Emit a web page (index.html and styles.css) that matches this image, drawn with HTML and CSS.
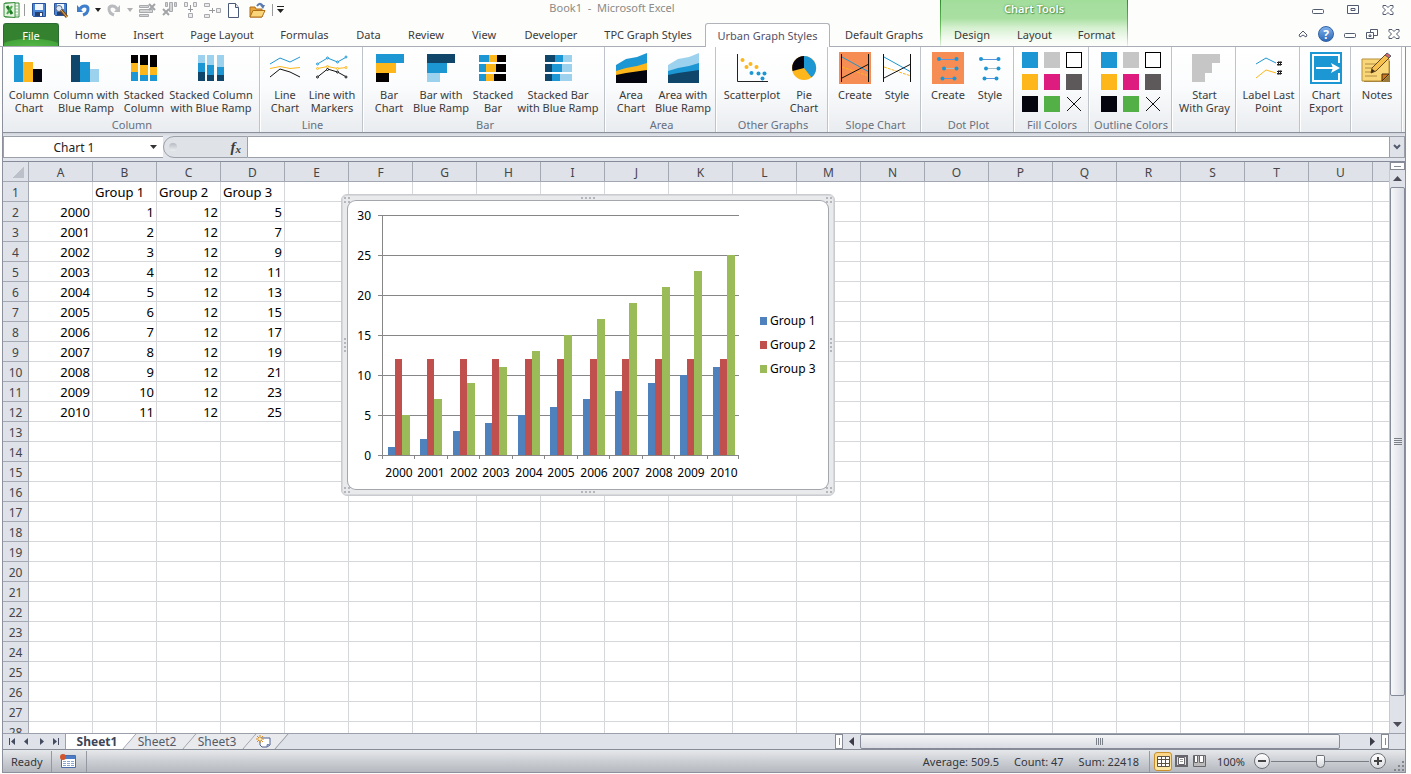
FILE: index.html
```html
<!DOCTYPE html>
<html lang="en">
<head>
    <meta charset="UTF-8">
    <meta name="viewport" content="width=device-width, initial-scale=1.0">
    <title>Book1 - Microsoft Excel</title>
    <link rel="stylesheet" href="styles.css">
</head>
<body>
    <div class="app">
        <header class="top">
            <div class="title-bar">
                <div class="quick-access">
                    <svg class="qa-logo" width="18" height="18" viewBox="0 0 18 18"><path d="M2 2h14v14H2z" fill="#fff" stroke="#2f8a35"/><path d="M11 5h4M11 8h4M11 11h4M11 14h4" stroke="#8cc48c"/><path d="M1 2.500l11-1v15l-11-1z" fill="#e3f3df" stroke="#3a8f3f"/><path d="M4 5l5 8" stroke="#1f7a26" stroke-width="3"/><path d="M9 5l-5 8" stroke="#4faa50" stroke-width="2"/></svg>
                    <span class="qa-line"></span>
                    <button aria-label="Save"><svg width="16" height="16" viewBox="0 0 16 16"><path d="M1.500 1.500h13v13h-12l-1-1z" fill="#4a86d8" stroke="#2a5298"/><path d="M4 2h8v6H4z" fill="#f0f6fd"/><path d="M4 10h8v4H4z" fill="#27406e"/><path d="M9 11h2v3H9z" fill="#fff"/></svg></button>
                    <button aria-label="Save as"><svg width="16" height="16" viewBox="0 0 16 16"><path d="M1.500 1.500h12v12h-11l-1-1z" fill="#4a86d8" stroke="#2a5298"/><path d="M4 2h7v5H4z" fill="#f0f6fd"/><path d="M4 10h6v3H4z" fill="#27406e"/><circle cx="6" cy="6.500" r="3" fill="#dbe9f8" stroke="#5d6c85"/><path d="M8 8l6 7" stroke="#7b4a1c" stroke-width="3"/><path d="M8 8l6 7" stroke="#f0b650"/></svg></button>
                    <button aria-label="Undo"><svg width="16" height="16" viewBox="0 0 16 16"><path d="M5 7c2-4 8-4 8 0 0 3-2 5-5 6" fill="none" stroke="#3f7ecb" stroke-width="3"/><path d="M2 3v7h6z" fill="#3f7ecb"/></svg></button>
                    <button class="qa-drop" aria-label="Undo list"><svg width="6" height="4" viewBox="0 0 6 4"><path d="M0 0h6L3 4z" fill="#222"/></svg></button>
                    <button aria-label="Redo"><svg width="16" height="16" viewBox="0 0 16 16"><path d="M10 7c-2-4-8-4-8 0 0 3 2 5 5 6" fill="none" stroke="#b9bbbf" stroke-width="3"/><path d="M13 3v7H7z" fill="#b9bbbf"/></svg></button>
                    <button class="qa-drop" aria-label="Redo list"><svg width="6" height="4" viewBox="0 0 6 4"><path d="M0 0h6L3 4z" fill="#b0b0b0"/></svg></button>
                    <button aria-label="Delete rows"><svg width="18" height="16" viewBox="0 0 18 16"><path d="M.5 3.500h9v2h-9zM.5 7.500h13v3H.5zM.5 12.500h9v2h-9z" fill="#d3d4d6" stroke="#a8aaae"/><path d="M10 2l6 6M16 2l-6 6" stroke="#a2a4a8" stroke-width="2"/></svg></button>
                    <button class="qa-wide" aria-label="Delete columns"><svg width="16" height="16" viewBox="0 0 16 16"><path d="M3.500.5h2v4h-2zM7.500.5h3v9h-3zM12.500.5h2v4h-2z" fill="#d3d4d6" stroke="#a8aaae"/><path d="M1 7l6 6M7 7l-6 6" stroke="#a2a4a8" stroke-width="2"/></svg></button>
                    <button class="qa-wide" aria-label="Insert column"><svg width="16" height="16" viewBox="0 0 16 16"><path d="M1.500.5h3v4h-3zM10.500.5h3v4h-3zM5.500 11.500h4v4h-4z" fill="#ececee" stroke="#a8aaae"/><path d="M7.500 3v7M5 7.500h5" stroke="#96989c"/></svg></button>
                    <button class="qa-wide" aria-label="Insert row"><svg width="18" height="16" viewBox="0 0 18 16"><path d="M.5 1.500h5v3h-5zM.5 12.500h5v3h-5zM12.500 6.500h4v4h-4z" fill="#ececee" stroke="#a8aaae"/><path d="M5 8.500h6M8.500 6v5" stroke="#96989c"/></svg></button>
                    <button aria-label="New"><svg width="12" height="16" viewBox="0 0 12 16"><path d="M.5 1.500h7l3 4v10H.5z" fill="#fff" stroke="#4c5878"/><path d="M7.500 1.500v4h3" fill="#dce4f2" stroke="#4c5878"/></svg></button>
                    <button class="qa-open" aria-label="Open"><svg width="17" height="16" viewBox="0 0 17 16"><path d="M1 5h5l1 2h6v8H1z" fill="#e9a53a" stroke="#b06f1a"/><path d="M4 8.500h12l-3 6.500H1z" fill="#fbd57a" stroke="#b06f1a"/><path d="M8 4c2-3 4-3 6 0" fill="none" stroke="#5a7ab0" stroke-width="2"/><path d="M11 3h5l-2 4z" fill="#5a7ab0"/></svg></button>
                    <span class="qa-line"></span>
                    <button class="qa-drop" aria-label="Customize toolbar"><svg width="7" height="8" viewBox="0 0 7 8"><path d="M0 0h7v1H0zM0 3h7L3.500 7z" fill="#222"/></svg></button>
                </div>
                <div class="doc-title">Book1&nbsp; -&nbsp; Microsoft Excel</div>
                <div class="window-buttons">
                    <button aria-label="Minimize"><svg width="12" height="12"><use href="#i-min"/></svg></button>
                    <button aria-label="Maximize"><svg width="12" height="12" viewBox="0 0 12 12"><path d="M.5 1.500h11v8H.5zM4 4.500h4v2H4z" fill="#fff" stroke="#525a70"/></svg></button>
                    <button aria-label="Close"><svg width="12" height="12"><use href="#i-close"/></svg></button>
                </div>
            </div>

            <nav class="tabs">
                <a class="tab file" href="#">File</a>
                <a class="tab" href="#">Home</a>
                <a class="tab" href="#">Insert</a>
                <a class="tab" href="#">Page Layout</a>
                <a class="tab" href="#">Formulas</a>
                <a class="tab" href="#">Data</a>
                <a class="tab" href="#">Review</a>
                <a class="tab" href="#">View</a>
                <a class="tab" href="#">Developer</a>
                <a class="tab" href="#">TPC Graph Styles</a>
                <a class="tab active" href="#">Urban Graph Styles</a>
                <a class="tab" href="#">Default Graphs</a>
                <div class="chart-tools">
                    <span class="chart-tools-title">Chart Tools</span>
                    <a class="tab" href="#">Design</a>
                    <a class="tab" href="#">Layout</a>
                    <a class="tab" href="#">Format</a>
                </div>
                <div class="tab-buttons">
                    <button aria-label="Collapse ribbon"><svg width="10" height="8" viewBox="0 0 10 8"><path d="M1 5l4-4 4 4-1 2-3-2-3 2z" fill="#fff" stroke="#525a70"/></svg></button>
                    <button class="help" aria-label="Help">?</button>
                    <button aria-label="Minimize workbook"><svg width="12" height="12"><use href="#i-min"/></svg></button>
                    <button aria-label="Restore workbook"><svg width="12" height="12" viewBox="0 0 12 12"><path d="M4.500 1.500h7v6h-7z" fill="#fff" stroke="#525a70"/><path d="M.5 4.500h7v6h-7zM3 7h2v1.500H3z" fill="#fff" stroke="#525a70"/></svg></button>
                    <button aria-label="Close workbook"><svg width="12" height="12"><use href="#i-close"/></svg></button>
                </div>
            </nav>
        </header>

        <main class="window">
            <div class="ribbon">
                <section class="group g-column">
                    <div class="tools">
                        <button class="tool"><svg width="32" height="32" viewBox="0 0 32 32"><path d="M1 3h9v27H1z" fill="#1d97d4"/><path d="M10 10h10v20H10z" fill="#fdb71a"/><path d="M20 17h9v13h-9z" fill="#050510"/></svg>Column<br>Chart</button>
                        <button class="tool"><svg width="32" height="32" viewBox="0 0 32 32"><path d="M1 3h9v27H1z" fill="#10466a"/><path d="M10 10h10v20H10z" fill="#1d97d4"/><path d="M20 17h9v13h-9z" fill="#9dd2ef"/></svg>Column with<br>Blue Ramp</button>
                        <button class="tool"><svg width="32" height="32" viewBox="0 0 32 32"><path d="M3 3h7v8H3zM12 3h8v10h-8zM22 3h7v12h-7z" fill="#050000"/><path d="M3 11h7v9H3zM12 13h8v10h-8zM22 15h7v8h-7z" fill="#fdb71a"/><path d="M3 20h7v9H3zM12 23h8v6h-8zM22 23h7v6h-7z" fill="#1d97d4"/></svg>Stacked<br>Column</button>
                        <button class="tool"><svg width="32" height="32" viewBox="0 0 32 32"><path d="M3 3h7v8H3zM12 3h7v10h-7zM22 3h7v12h-7z" fill="#9dd2ef"/><path d="M3 11h7v9H3zM12 13h7v10h-7zM22 15h7v8h-7z" fill="#1d97d4"/><path d="M3 20h7v9H3zM12 23h7v6h-7zM22 23h7v6h-7z" fill="#10466a"/></svg>Stacked Column<br>with Blue Ramp</button>
                    </div>
                    <h2>Column</h2>
                </section>
                <section class="group g-line">
                    <div class="tools">
                        <button class="tool"><svg width="32" height="32" viewBox="0 0 32 32" fill="none"><path d="M1 12l10-6 10 4 10-5" stroke="#1d97d4"/><path d="M1 16.500l10-2 10 2 10-1" stroke="#fdb71a"/><path d="M1 25l10-8 10 3 10 5" stroke="#111"/></svg>Line<br>Chart</button>
                        <button class="tool"><svg width="32" height="32" viewBox="0 0 32 32" fill="#fff"><path d="M1.500 12l10-6 10 4 9-5" fill="none" stroke="#1d97d4"/><path d="M1.500 16.500l10-2 10 2 9-1" fill="none" stroke="#fdb71a"/><path d="M1.500 25l10-8 10 3 9 5" fill="none" stroke="#111"/><g stroke="#1d97d4"><circle cx="1.500" cy="12" r="1"/><circle cx="11.500" cy="6" r="1"/><circle cx="21.500" cy="10" r="1"/><circle cx="30" cy="5" r="1"/></g><g stroke="#fdb71a"><circle cx="1.500" cy="16.500" r="1"/><circle cx="11.500" cy="14.500" r="1"/><circle cx="21.500" cy="16.500" r="1"/><circle cx="30" cy="15.500" r="1"/></g><g stroke="#111"><circle cx="1.500" cy="25" r="1"/><circle cx="11.500" cy="17.500" r="1"/><circle cx="21.500" cy="20" r="1"/><circle cx="30" cy="25" r="1"/></g></svg>Line with<br>Markers</button>
                    </div>
                    <h2>Line</h2>
                </section>
                <section class="group g-bar">
                    <div class="tools">
                        <button class="tool"><svg width="32" height="32" viewBox="0 0 32 32"><path d="M3 2h28v9H3z" fill="#1d97d4"/><path d="M3 11h20v10H3z" fill="#fdb71a"/><path d="M3 21h13v9H3z" fill="#050000"/></svg>Bar<br>Chart</button>
                        <button class="tool"><svg width="32" height="32" viewBox="0 0 32 32"><path d="M2 2h28v9H2z" fill="#10466a"/><path d="M2 11h20v10H2z" fill="#1d97d4"/><path d="M2 21h13v9H2z" fill="#9dd2ef"/></svg>Bar with<br>Blue Ramp</button>
                        <button class="tool"><svg width="32" height="32" viewBox="0 0 32 32"><path d="M2 3h10v7H2zM2 12h7v8H2zM2 22h7v7H2z" fill="#1d97d4"/><path d="M12 3h8v7h-8zM9 12h10v8H9zM9 22h8v7H9z" fill="#fdb71a"/><path d="M20 3h9v7h-9zM19 12h10v8H19zM17 22h12v7H17z" fill="#050000"/></svg>Stacked<br>Bar</button>
                        <button class="tool"><svg width="32" height="32" viewBox="0 0 32 32"><path d="M3 3h10v7H3zM3 12h7v8H3zM3 22h7v7H3z" fill="#10466a"/><path d="M13 3h8v7h-8zM10 12h10v8H10zM10 22h8v7h-8z" fill="#1d97d4"/><path d="M21 3h9v7h-9zM20 12h10v8H20zM18 22h12v7H18z" fill="#9dd2ef"/></svg>Stacked Bar<br>with Blue Ramp</button>
                    </div>
                    <h2>Bar</h2>
                </section>
                <section class="group g-area">
                    <div class="tools">
                        <button class="tool"><svg width="32" height="32" viewBox="0 0 32 32"><path d="M1 13l10-6 11-2 10-4v30H1z" fill="#1d97d4"/><path d="M1 19l10-3 11-2 10-3v20H1z" fill="#fdb71a"/><path d="M1 23l10-2 21-3v13H1z" fill="#050510"/></svg>Area<br>Chart</button>
                        <button class="tool"><svg width="32" height="32" viewBox="0 0 32 32"><path d="M1 13l10-6 11-2 10-4v30H1z" fill="#9dd2ef"/><path d="M1 19l10-3 11-2 10-3v20H1z" fill="#1d97d4"/><path d="M1 23l10-2 21-3v13H1z" fill="#10466a"/></svg>Area with<br>Blue Ramp</button>
                    </div>
                    <h2>Area</h2>
                </section>
                <section class="group g-other">
                    <div class="tools">
                        <button class="tool"><svg width="32" height="32" viewBox="0 0 32 32"><path d="M1.500 2v27.500H32" fill="none" stroke="#222"/><g fill="#fdb71a"><circle cx="6.500" cy="8" r="2"/><circle cx="10.500" cy="15" r="2"/><circle cx="14.500" cy="12" r="2"/><circle cx="20.500" cy="15" r="2"/></g><g fill="#1d97d4"><circle cx="15.500" cy="21" r="2"/><circle cx="22.500" cy="21.500" r="2"/><circle cx="28.500" cy="21.500" r="2"/><circle cx="26.500" cy="26.500" r="2"/></g></svg>Scatterplot</button>
                        <button class="tool"><svg width="32" height="32" viewBox="0 0 32 32"><circle cx="16" cy="16" r="12" fill="#fdb71a"/><path d="M16 16V4a12 12 0 0 1 7.500 21.500z" fill="#1d97d4"/><path d="M16 16L4.500 19A12 12 0 0 1 16 4z" fill="#050510"/></svg>Pie<br>Chart</button>
                    </div>
                    <h2>Other Graphs</h2>
                </section>
                <section class="group g-slope">
                    <div class="tools">
                        <button class="tool"><svg width="32" height="32" viewBox="0 0 32 32"><path d="M0 0h32v32H0z" fill="#f58d54"/><use href="#i-slope"/></svg>Create</button>
                        <button class="tool"><svg width="32" height="32" viewBox="0 0 32 32"><use href="#i-slope"/></svg>Style</button>
                    </div>
                    <h2>Slope Chart</h2>
                </section>
                <section class="group g-dot">
                    <div class="tools">
                        <button class="tool"><svg width="32" height="32" viewBox="0 0 32 32"><path d="M0 0h32v32H0z" fill="#f58d54"/><use href="#i-dots"/></svg>Create</button>
                        <button class="tool"><svg width="32" height="32" viewBox="0 0 32 32"><use href="#i-dots"/></svg>Style</button>
                    </div>
                    <h2>Dot Plot</h2>
                </section>
                <section class="group g-fill">
                    <div class="swatches">
                        <button class="blue" aria-label="Blue"></button><button class="gray" aria-label="Gray"></button><button class="white" aria-label="White"></button>
                        <button class="yellow" aria-label="Yellow"></button><button class="pink" aria-label="Pink"></button><button class="dark" aria-label="Dark gray"></button>
                        <button class="black" aria-label="Black"></button><button class="green" aria-label="Green"></button><button aria-label="None"><svg width="16" height="16"><use href="#i-none"/></svg></button>
                    </div>
                    <h2>Fill Colors</h2>
                </section>
                <section class="group g-outline">
                    <div class="swatches">
                        <button class="blue" aria-label="Blue"></button><button class="gray" aria-label="Gray"></button><button class="white" aria-label="White"></button>
                        <button class="yellow" aria-label="Yellow"></button><button class="pink" aria-label="Pink"></button><button class="dark" aria-label="Dark gray"></button>
                        <button class="black" aria-label="Black"></button><button class="green" aria-label="Green"></button><button aria-label="None"><svg width="16" height="16"><use href="#i-none"/></svg></button>
                    </div>
                    <h2>Outline Colors</h2>
                </section>
                <section class="group g-single">
                    <div class="tools">
                        <button class="tool"><svg width="32" height="32" viewBox="0 0 32 32"><path d="M3 2h28v9h-8v10h-7v9H3z" fill="#c6c6c6"/></svg>Start<br>With Gray</button>
                    </div>
                </section>
                <section class="group g-single">
                    <div class="tools">
                        <button class="tool"><svg width="32" height="32" viewBox="0 0 32 32" fill="none"><path d="M3 12l10-6 10 5" stroke="#1d97d4"/><path d="M3 26l10-8 10 3" stroke="#fdb71a"/><path d="M24 10.500h5M24 12.500h5M26 9l-1 5M28 9l-1 5M24 19.500h5M24 21.500h5M26 18l-1 5M28 18l-1 5" stroke="#222"/></svg>Label Last<br>Point</button>
                    </div>
                </section>
                <section class="group g-small">
                    <div class="tools">
                        <button class="tool"><svg width="32" height="32" viewBox="0 0 32 32"><path d="M0 0h32v32H0z" fill="#1d97d4"/><path d="M29 11V3H3v26h26v-8" fill="none" stroke="#fff" stroke-width="2"/><path d="M6 16h18" stroke="#fff" stroke-width="2"/><path d="M21 11l9 5-9 5 2-5z" fill="#fff"/></svg>Chart<br>Export</button>
                    </div>
                </section>
                <section class="group g-small">
                    <div class="tools">
                        <button class="tool"><svg width="32" height="32" viewBox="0 0 32 32"><path d="M3 9h26v21H3z" fill="#9a7a3a"/><path d="M1 7h27v16l-6 6H1z" fill="#f9d677" stroke="#b58f3c"/><path d="M28 22l-7 7v-7z" fill="#c9781f" stroke="#4a2d10"/><path d="M4 12h15M4 16h13M4 20h8M4 24h12" stroke="#b08d45"/><path d="M10 21l1-5L25 2l4 3-14 14z" fill="#f6c04e" stroke="#6a4a1c"/><path d="M24 3l2-2 4 3-2 2z" fill="#d9636b" stroke="#54606c"/><path d="M10 21l1-4 3 2z" fill="#3c2c1c"/></svg>Notes</button>
                    </div>
                </section>
            </div>

            <div class="formula-bar">
                <div class="name-box">
                    <input type="text" value="Chart 1" aria-label="Name box">
                    <button aria-label="Name list"><svg width="7" height="4" viewBox="0 0 7 4"><path d="M0 0h7L3.500 4z" fill="#333"/></svg></button>
                </div>
                <div class="fx">
                    <span class="knob"></span>
                    <button aria-label="Insert function"><i>f</i><i class="sub">x</i></button>
                </div>
                <input class="formula" type="text" aria-label="Formula">
                <button class="expand" aria-label="Expand formula bar"><svg width="8" height="6" viewBox="0 0 8 6"><path d="M1 1l3 3 3-3" fill="none" stroke="#525a70" stroke-width="2"/></svg></button>
            </div>

            <div class="workbook">
                <div class="sheet" id="sheet">
                    <table class="grid" id="grid"></table>
                    <div class="chart-frame">
                        <svg id="chart" width="480" height="288" viewBox="348 201 480 288" role="img" aria-label="Column chart of the three groups, 2000 to 2010"></svg>
                        <i class="grip top"></i><i class="grip bottom"></i><i class="grip left"></i><i class="grip right"></i>
                        <i class="corner nw"></i><i class="corner ne"></i><i class="corner sw"></i><i class="corner se"></i>
                    </div>
                </div>
                <div class="v-scroll">
                    <span class="v-split"></span>
                    <button aria-label="Scroll up"><svg width="9" height="5" viewBox="0 0 9 5"><path d="M0 5h9L4.500 0z" fill="#4c4c58"/></svg></button>
                    <div class="v-thumb"><span></span></div>
                    <button class="v-down" aria-label="Scroll down"><svg width="9" height="5" viewBox="0 0 9 5"><path d="M0 0h9L4.500 5z" fill="#4c4c58"/></svg></button>
                </div>
            </div>

            <div class="sheet-bar">
                <div class="sheet-nav">
                    <button aria-label="First sheet"><svg width="7" height="7" viewBox="0 0 7 7"><path d="M0 0h1v7H0zM6 0v7L2 3.500z"/></svg></button>
                    <button aria-label="Previous sheet"><svg width="7" height="7" viewBox="0 0 7 7"><path d="M5 0v7L1 3.500z"/></svg></button>
                    <button aria-label="Next sheet"><svg width="7" height="7" viewBox="0 0 7 7"><path d="M2 0v7l4-3.500z"/></svg></button>
                    <button aria-label="Last sheet"><svg width="7" height="7" viewBox="0 0 7 7"><path d="M6 0h1v7H6zM1 0v7l4-3.500z"/></svg></button>
                </div>
                <div class="sheet-tabs">
                    <a class="current" href="#">Sheet1</a>
                    <a href="#">Sheet2</a>
                    <a href="#">Sheet3</a>
                    <button aria-label="New sheet"><svg width="16" height="14" viewBox="0 0 16 14"><path d="M4 3h10v7l-3 2H6l-2-2z" fill="#fff" stroke="#4d5f8e"/><path d="M14 9l-4 3 1-3z" fill="#6e82b4"/><path d="M4 0v8M0 4h8M1 1l6 6M7 1L1 7" stroke="#d98a1e"/><circle cx="4" cy="4" r="1.500" fill="#ffe9a8"/></svg></button>
                </div>
                <div class="h-scroll">
                    <span class="h-split"></span>
                    <button aria-label="Scroll left"><svg width="5" height="9" viewBox="0 0 5 9"><path d="M5 0v9L0 4.500z" fill="#3c3c48"/></svg></button>
                    <div class="h-thumb"><span></span></div>
                    <button class="h-right" aria-label="Scroll right"><svg width="5" height="9" viewBox="0 0 5 9"><path d="M0 0v9l5-4.500z" fill="#3c3c48"/></svg></button>
                    <span class="h-split"></span>
                </div>
            </div>

            <footer class="status">
                <span class="ready">Ready</span>
                <button class="macro" aria-label="Record macro"><svg width="16" height="14" viewBox="0 0 16 14"><path d="M1.500 1.500h14v12h-14z" fill="#fff" stroke="#4a6ca8"/><path d="M2 2h13v3H2z" fill="#4a7cc8"/><path d="M3 7.500h3M7 7.500h3M11 7.500h3M3 9.500h3M7 9.500h3M11 9.500h3M3 11.500h3M7 11.500h3M11 11.500h3" stroke="#8ba6d0"/><circle cx="3" cy="3" r="3" fill="#d3552c"/></svg></button>
                <div class="figures">
                    <span>Average: 509.5</span>
                    <span>Count: 47</span>
                    <span>Sum: 22418</span>
                </div>
                <div class="views">
                    <button class="on" aria-label="Normal view"><svg width="13" height="11" viewBox="0 0 13 11"><path d="M.5.5h12v10H.5zM.5 3.500h12M.5 7.500h12M4.500.5v10M8.500.5v10" fill="#fff" stroke="#5c5340"/></svg></button>
                    <button aria-label="Page layout view"><svg width="13" height="12" viewBox="0 0 13 12"><path d="M1 1h11v10H1z" fill="#ddd" stroke="#66666c" stroke-width="2"/><path d="M3.500 2.500h6v7h-6z" fill="#fff" stroke="#66666c"/><path d="M5 4.500h3M5 6.500h3" stroke="#999"/></svg></button>
                    <button aria-label="Page break preview"><svg width="13" height="12" viewBox="0 0 13 12"><path d="M.5.5h12v11H.5z" fill="#bbb" stroke="#66666c"/><path d="M1.500.5h3v7h-3zM6.500.5h4v7h-4z" fill="#fff" stroke="#66666c"/></svg></button>
                </div>
                <span class="zoom-level">100%</span>
                <button class="round" aria-label="Zoom out"><svg width="8" height="8" viewBox="0 0 8 8"><path d="M0 3h8v2H0z" fill="#444"/></svg></button>
                <input class="zoom" type="range" min="0" max="100" value="50" aria-label="Zoom">
                <button class="round" aria-label="Zoom in"><svg width="8" height="8" viewBox="0 0 8 8"><path d="M0 3h8v2H0zM3 0h2v8H3z" fill="#444"/></svg></button>
                <svg class="resize" width="12" height="12" viewBox="0 0 12 12"><path d="M9 1h2v2H9zM9 5h2v2H9zM5 5h2v2H5zM9 9h2v2H9zM5 9h2v2H5zM1 9h2v2H1z" fill="#83868c"/></svg>
            </footer>
        </main>
    </div>

    <svg width="0" height="0" class="defs">
        <symbol id="i-min" viewBox="0 0 12 12"><rect x=".5" y="5.500" width="11" height="4" rx="1" fill="#fff" stroke="#525a70"/></symbol>
        <symbol id="i-close" viewBox="0 0 12 12"><path d="M1 1.500h3l2 2 2-2h3v2L8.500 6 11 8.500v2H8l-2-2-2 2H1v-2L3.500 6 1 3.500z" fill="#fff" stroke="#525a70"/></symbol>
        <symbol id="i-none" viewBox="0 0 16 16"><path d="M1 1l14 14M15 1L1 15" stroke="#111"/></symbol>
        <symbol id="i-slope" viewBox="0 0 32 32"><path d="M3 5l27 15" stroke="#1d97d4" fill="none"/><path d="M3 15l27 9" stroke="#fdb71a" stroke-dasharray="3 1"/><path d="M3 26l27-14" stroke="#111"/><path d="M2.500 2v28M29.500 2v28" stroke="#111"/></symbol>
        <symbol id="i-dots" viewBox="0 0 32 32"><path d="M7 7.500h17M10 26.500h12" stroke="#5b95e0"/><path d="M12 16.500h13" stroke="#a9bfc8"/><g fill="#1d97d4"><circle cx="7" cy="7" r="2"/><circle cx="24.500" cy="7" r="2"/><circle cx="12" cy="16.500" r="2"/><circle cx="24.500" cy="16.500" r="2"/><circle cx="10.500" cy="26.500" r="2"/><circle cx="22.500" cy="26.500" r="2"/></g></symbol>
    </svg>

    <script>
        const series = [
            { name: 'Group 1', color: '#4f81bd', values: [1, 2, 3, 4, 5, 6, 7, 8, 9, 10, 11] },
            { name: 'Group 2', color: '#c0504d', values: [12, 12, 12, 12, 12, 12, 12, 12, 12, 12, 12] },
            { name: 'Group 3', color: '#9bbb59', values: [5, 7, 9, 11, 13, 15, 17, 19, 21, 23, 25] }
        ];
        const years = series[0].values.map((v, i) => 2000 + i);

        // Worksheet
        const sheet = document.getElementById('sheet');
        const grid = document.getElementById('grid');

        function colName(i) {
            return (i > 25 ? colName(Math.floor(i / 26) - 1) : '') + String.fromCharCode(65 + i % 26);
        }

        function cell(row, col) {
            if (col > 3) return '<td></td>';
            if (row === 1) return '<td>' + (col ? series[col - 1].name : '') + '</td>';
            if (row > 12) return '<td></td>';
            return '<td class="num">' + (col ? series[col - 1].values[row - 2] : years[row - 2]) + '</td>';
        }

        // Fill the visible area; the last column is only partly in view and has no letter
        function drawGrid() {
            const count = Math.max(4, Math.ceil((sheet.clientWidth - 26) / 64));
            const rows = Math.ceil((sheet.clientHeight - 20) / 20);
            const cols = Array.from({ length: count }, (_, i) => i < count - 1 ? colName(i) : '');

            let html = '<thead><tr><th class="row-head select-all"></th>' + cols.map(c => '<th>' + c + '</th>').join('') + '</tr></thead><tbody>';
            for (let r = 1; r <= rows; r++) {
                html += '<tr><th class="row-head">' + r + '</th>' + cols.map((c, i) => cell(r, i)).join('') + '</tr>';
            }
            grid.style.width = 26 + count * 64 + 'px';
            grid.innerHTML = html + '</tbody>';
        }

        drawGrid();
        window.addEventListener('resize', drawGrid);

        // Chart
        const left = 382, right = 739, base = 455, unit = 8;
        const step = (right - left) / years.length;
        let svg = '';

        for (let v = 0; v <= 30; v += 5) {
            const y = base - v * unit;
            svg += `<path class="axis" d="M${left - 4} ${y + 0.5}H${right}"/>`;
            svg += `<text x="371" y="${y + 5}" text-anchor="end">${v}</text>`;
        }
        years.forEach((year, i) => {
            const x = Math.round(left + i * step);
            series.forEach((s, n) => {
                const h = s.values[i] * unit;
                svg += `<rect x="${x + 6 + n * 7}" y="${base - h}" width="${n === 2 ? 8 : 7}" height="${h}" fill="${s.color}"/>`;
            });
            svg += `<path class="axis" d="M${x + 0.5} ${base}v4"/>`;
            svg += `<text x="${x + 17}" y="477" text-anchor="middle">${year}</text>`;
        });
        svg += `<path class="axis" d="M${left + 0.5} 215V${base}M${right - 0.5} ${base}v4M${left} ${base + 0.5}H${right}"/>`;
        series.forEach((s, i) => {
            svg += `<rect x="760" y="${317 + i * 24}" width="7" height="8" fill="${s.color}"/>`;
            svg += `<text x="770" y="${325 + i * 24}">${s.name}</text>`;
        });
        document.getElementById('chart').innerHTML = svg;
    </script>
</body>
</html>
```
FILE: styles.css
```css
* {
    box-sizing: border-box;
}

body {
    margin: 0;
    font-family: "Noto Sans", "Open Sans", sans-serif;
    font-size: 11px;
    color: #3b3b3b;
    background: #fdfdfb;
}

button {
    display: flex;
    align-items: center;
    justify-content: center;
    padding: 0;
    border: 0;
    background: none;
    font: inherit;
    color: inherit;
}

input {
    border: 0;
    padding: 0;
    font: inherit;
    outline: none;
}

a {
    color: inherit;
    text-decoration: none;
}

svg {
    display: block;
    flex: none;
}

.defs {
    position: absolute;
}

.app {
    height: 100vh;
    display: flex;
    flex-direction: column;
    overflow: hidden;
}

/* Title bar and tabs */
.title-bar {
    display: grid;
    grid-template-columns: 281px 656px 1fr;
    height: 23px;
    padding: 0 10px 0 3px;
}

.quick-access {
    display: flex;
    align-items: center;
    gap: 6px;
    height: 20px;
}

.qa-logo {
    margin-right: -3px;
}

.qa-line {
    width: 1px;
    height: 12px;
    background: #9a9a9a;
}

.qa-drop {
    margin-left: -2px;
}

.qa-wide {
    margin-left: -1px;
}

.qa-open {
    margin-left: 3px;
}

.doc-title {
    color: #8b8b87;
    line-height: 15px;
    text-align: center;
}

.window-buttons {
    display: flex;
    justify-content: flex-end;
    gap: 23px;
    height: 20px;
    padding-right: 7px;
}

.tabs {
    display: flex;
    height: 24px;
    padding: 0 11px 0 3px;
    border-bottom: 1px solid #a9adb5;
}

.tab {
    flex: none;
    text-align: center;
    line-height: 24px;
    height: 23px;
    white-space: nowrap;
}

.tab:nth-child(2) { width: 61px; padding-left: 2px; }
.tab:nth-child(3) { width: 57px; }
.tab:nth-child(4) { width: 90px; }
.tab:nth-child(5) { width: 75px; }
.tab:nth-child(6) { width: 53px; }
.tab:nth-child(7) { width: 62px; }
.tab:nth-child(8) { width: 54px; }
.tab:nth-child(9) { width: 80px; }
.tab:nth-child(10) { width: 114px; }
.tab:nth-child(12) { width: 108px; }

.tab.file {
    width: 56px;
    color: #fff;
    border: 1px solid #2c6b35;
    border-bottom: 0;
    border-radius: 3px 3px 0 0;
    background: radial-gradient(ellipse 60% 40% at 50% 105%, #57b947 0, #45a63c 90%, #34812f 100%);
}

.tab.active {
    width: 125px;
    height: 24px;
    color: #565068;
    background: #fff;
    border: 1px solid #b0b3ba;
    border-bottom: 0;
    border-radius: 3px 3px 0 0;
}

.chart-tools {
    display: grid;
    grid-template-columns: 62px 63px 61px;
    align-content: end;
    width: 188px;
    height: 46px;
    margin: -23px 0 0 2px;
    border-left: 1px solid #4da345;
    border-right: 1px solid #4da345;
    border-image: linear-gradient(#2e8b2e, #6cbf5c 60%, #eaf6e6) 1;
    background: linear-gradient(#a3dd9c, #a9e0a2 40%, #d5f0d0 60%, #f4fbf2 85%, #fdfdfb);
}

.chart-tools .tab {
    width: auto;
    padding: 0;
}

.chart-tools-title {
    grid-column: 1 / -1;
    height: 23px;
    line-height: 17px;
    text-align: center;
    color: #fff;
    font-weight: 600;
    text-shadow: 0 0 2px #3f8a3a, 1px 1px 1px #5f9d58;
}

.tab-buttons {
    display: flex;
    align-items: center;
    gap: 10px;
    margin-left: auto;
    height: 22px;
}

.help {
    width: 16px;
    height: 16px;
    border: 1px solid #2f62a4;
    border-radius: 50%;
    background: linear-gradient(#7eb0ea, #2d68b8);
    color: #fff;
    font-weight: 700;
    font-size: 12px;
}

/* Window body */
.window {
    flex: 1;
    min-height: 0;
    display: flex;
    flex-direction: column;
    margin: 0 5px 1px 2px;
    border: 1px solid #8b909c;
    border-top: 0;
    background: #dfe2e8;
}

.ribbon {
    display: flex;
    height: 86px;
    background: linear-gradient(#fff, #fbfcfd 45%, #e9ecf0);
    border-bottom: 1px solid #8b909a;
}

.group {
    flex: none;
    display: flex;
    flex-direction: column;
    justify-content: space-between;
    padding: 5px 3px 0 4px;
    border-right: 1px solid #fff;
    box-shadow: inset -1px 0 #bfc3ca;
}

.group h2 {
    margin: 0;
    font-size: 11px;
    font-weight: 400;
    line-height: 15px;
    text-align: center;
    color: #66707f;
    white-space: nowrap;
}

.tools {
    display: grid;
}

.tool {
    flex-direction: column;
    justify-content: flex-start;
    line-height: 13px;
    white-space: nowrap;
}

.tool svg {
    margin-bottom: 4px;
}

.g-column { width: 258px; }
.g-column .tools { grid-template-columns: 44px 70px 46px 88px; }
.g-line { width: 103px; }
.g-line .tools { grid-template-columns: 40px 54px; }
.g-bar { width: 242px; }
.g-bar .tools { grid-template-columns: 42px 62px 42px 88px; }
.g-area { width: 111px; }
.g-area .tools { grid-template-columns: 42px 62px; }
.g-other { width: 112px; }
.g-other .tools { grid-template-columns: 62px 42px; }
.g-slope, .g-dot { width: 93px; }
.g-slope .tools, .g-dot .tools { grid-template-columns: 44px 40px; }
.g-fill { width: 75px; }
.g-outline { width: 83px; }
.g-single { width: 64px; }
.g-small { width: 51px; }

.group.g-fill, .group.g-outline, .group.g-single, .group.g-small {
    padding-left: 0;
    padding-right: 0;
}

.swatches {
    display: grid;
    grid-template-columns: repeat(3, 16px);
    gap: 6px;
    justify-content: center;
}

.swatches button {
    height: 16px;
}

.blue { background: #1d97d4; }
.gray { background: #c6c6c6; }
.swatches .white { background: #fff; border: 1px solid #000; }
.yellow { background: #fdb71a; }
.pink { background: #de1c7f; }
.dark { background: #5d585a; }
.black { background: #050510; }
.green { background: #53b046; }

/* Formula bar */
.formula-bar {
    display: flex;
    height: 29px;
    padding: 3px 0;
    background: linear-gradient(#cdd1d8, #e2e5ec 3px, #e2e5ec);
    border-bottom: 1px solid #868b9a;
}

.name-box {
    display: flex;
    width: 160px;
    background: #fff;
    border: 1px solid #9ba0a9;
    border-right: 0;
}

.name-box input {
    width: 140px;
    font-size: 12px;
    text-align: center;
    color: #222;
}

.name-box button {
    width: 19px;
}

.fx {
    display: flex;
    justify-content: space-between;
    align-items: center;
    width: 85px;
    padding: 0 6px 0 5px;
    border: 1px solid #9ba0a9;
    border-radius: 11px 0 0 11px;
    background: #dfe2e7;
}

.knob {
    width: 8px;
    height: 8px;
    border-radius: 50%;
    background: linear-gradient(#b7bbc2, #eceef1);
}

.fx button {
    font: bold 15px "Liberation Serif", serif;
}

.fx .sub {
    font-size: 11px;
    padding-top: 3px;
}

.formula {
    flex: 1;
    min-width: 0;
    background: #fff;
    border: 1px solid #9ba0a9;
    border-width: 1px 0;
}

.expand {
    width: 16px;
    border: 1px solid #9ba0a9;
    background: #dfe2e8;
}

/* Sheet */
.workbook {
    flex: 1;
    min-height: 0;
    display: flex;
}

.sheet {
    flex: 1;
    min-width: 0;
    position: relative;
    overflow: hidden;
    background: #fff;
}

.grid {
    table-layout: fixed;
    border-collapse: separate;
    border-spacing: 0;
    font-size: 13px;
    color: #000;
}

.grid th,
.grid td {
    width: 64px;
    height: 20px;
    padding: 2px 2px 0;
    line-height: 17px;
    border-right: 1px solid #d6d7da;
    border-bottom: 1px solid #d6d7da;
    white-space: nowrap;
}

.grid th {
    font-weight: 400;
    font-size: 12px;
    color: #454549;
    background: #dfe2e8;
    border-color: #a3a8b3;
}

.grid .row-head {
    width: 26px;
}

.grid .select-all {
    background: linear-gradient(135deg, #dfe2e8 50%, #bcc0c8 50%) 10px 5px / 11px 11px no-repeat #dfe2e8;
}

.grid .num {
    text-align: right;
}

.chart-frame {
    position: absolute;
    left: 338px;
    top: 32px;
    padding: 6px;
    border-radius: 6px;
    border: 1px solid #c9cbcf;
    background: #e9eaec;
    box-shadow: inset 0 0 0 1px #d7d8db;
}

#chart {
    background: #fff;
    border-radius: 8px;
    box-shadow: 0 0 0 1px #a4a6ae;
    font-size: 12px;
}

.axis {
    fill: none;
    stroke: #868686;
}

.grip,
.corner {
    position: absolute;
    background: radial-gradient(circle, #b4b6bb 1px, transparent 1px) 0 0 / 4px 4px;
}

.grip.top, .grip.bottom { width: 16px; height: 4px; left: calc(50% - 8px); }
.grip.left, .grip.right { width: 4px; height: 16px; top: calc(50% - 8px); }
.grip.top { top: 1px; }
.grip.bottom { bottom: 1px; }
.grip.left { left: 1px; }
.grip.right { right: 1px; }
.corner { width: 8px; height: 8px; }
.corner.nw, .corner.ne { top: 1px; }
.corner.sw, .corner.se { bottom: 1px; }
.corner.nw, .corner.sw { left: 1px; }
.corner.ne, .corner.se { right: 1px; }

.v-scroll {
    display: flex;
    flex-direction: column;
    width: 16px;
    background: #dfe2e8;
    border-left: 1px solid #c5c9d1;
}

.v-split {
    height: 8px;
    border: 1px solid #868b96;
    background: linear-gradient(#868b96, #868b96) center / 7px 1px no-repeat #fff;
}

.v-scroll button {
    height: 17px;
}

.v-thumb {
    flex: 1;
    display: flex;
    align-items: center;
    justify-content: center;
    border: 1px solid #868b9a;
    border-radius: 2px;
    background: linear-gradient(90deg, #f6f7f9, #d9dce2);
}

.v-thumb span {
    width: 8px;
    height: 8px;
    background: repeating-linear-gradient(#7b7f88 0 1px, transparent 1px 2px);
}

.v-scroll .v-down {
    height: 37px;
    padding-top: 20px;
}

/* Sheet tabs */
.sheet-bar {
    display: flex;
    height: 16px;
    border-top: 1px solid #9ba0ab;
    background: #dfe2e8;
}

.sheet-nav {
    display: flex;
    align-items: center;
    justify-content: space-around;
    width: 63px;
    padding: 0 2px;
    fill: #444a60;
    border-right: 1px solid #9ba0ab;
}

.sheet-tabs {
    display: flex;
    overflow: hidden;
    padding-right: 9px;
    font-size: 12px;
    line-height: 15px;
    color: #555a68;
}

.sheet-tabs a,
.sheet-tabs button {
    position: relative;
    z-index: 0;
    width: 60px;
    text-align: center;
    padding-right: 6px;
}

/* slanted edge between the tabs */
.sheet-tabs a::before,
.sheet-tabs button::before {
    content: "";
    position: absolute;
    inset: 0;
    z-index: -1;
    transform: skewX(-41deg);
    background: #e8eaee;
    border-right: 1px solid #8d929e;
}

.sheet-tabs button {
    width: 32px;
    padding-right: 4px;
}

.sheet-tabs .current {
    width: 64px;
    padding-right: 2px;
    font-weight: 700;
    color: #3d4456;
}

.sheet-tabs .current::before {
    left: -10px;
    background: #fff;
}

.h-scroll {
    display: flex;
    flex: 1;
    max-width: 554px;
    margin-left: auto;
    margin-right: 16px;
}

.h-split {
    width: 8px;
    border: 1px solid #868b96;
    background: linear-gradient(#868b96, #868b96) center / 1px 7px no-repeat #fff;
}

.h-scroll button {
    width: 17px;
}

.h-thumb {
    flex: 1;
    display: flex;
    align-items: center;
    justify-content: center;
    border: 1px solid #868b9a;
    border-radius: 2px;
    background: linear-gradient(#f4f5f7, #d9dce2);
}

.h-thumb span {
    width: 8px;
    height: 7px;
    background: repeating-linear-gradient(90deg, #7b7f88 0 1px, transparent 1px 2px);
}

.h-scroll .h-right {
    width: 41px;
    padding-left: 24px;
}

/* Status bar */
.status {
    display: flex;
    align-items: center;
    height: 23px;
    border-top: 1px solid #868b96;
    background: linear-gradient(#e6e8eb, #ced1d6 45%, #b5b8be);
    color: #33363c;
}

.ready {
    width: 49px;
    padding-left: 8px;
    line-height: 21px;
    border-right: 1px solid #9598a0;
}

.macro {
    width: 35px;
    height: 21px;
    padding-right: 2px;
    border-right: 1px solid #9598a0;
}

.figures {
    display: flex;
    gap: 15px;
    margin-left: auto;
    padding-right: 10px;
    line-height: 21px;
    border-right: 1px solid #9598a0;
}

.views {
    display: flex;
    padding-left: 4px;
}

.views button {
    width: 18px;
    height: 19px;
}

.views .on {
    background: linear-gradient(#fbd486, #fde9a6);
    border: 1px solid #c98f2b;
    border-radius: 3px;
}

.zoom-level {
    width: 46px;
    text-align: center;
}

.round {
    width: 16px;
    height: 16px;
    border: 1px solid #6e7178;
    border-radius: 50%;
    background: linear-gradient(#fff, #dadce0);
}

.zoom {
    width: 98px;
    height: 16px;
    margin: 0 1px;
    appearance: none;
    background: linear-gradient(#7a7d84, #7a7d84) center / 100% 1px no-repeat;
}

.zoom::-webkit-slider-thumb {
    appearance: none;
    width: 9px;
    height: 13px;
    background: linear-gradient(#fff, #d4d6da);
    border: 1px solid #6e7178;
    border-radius: 2px 2px 5px 5px;
}

.resize {
    align-self: flex-end;
    margin-left: 7px;
}
```
